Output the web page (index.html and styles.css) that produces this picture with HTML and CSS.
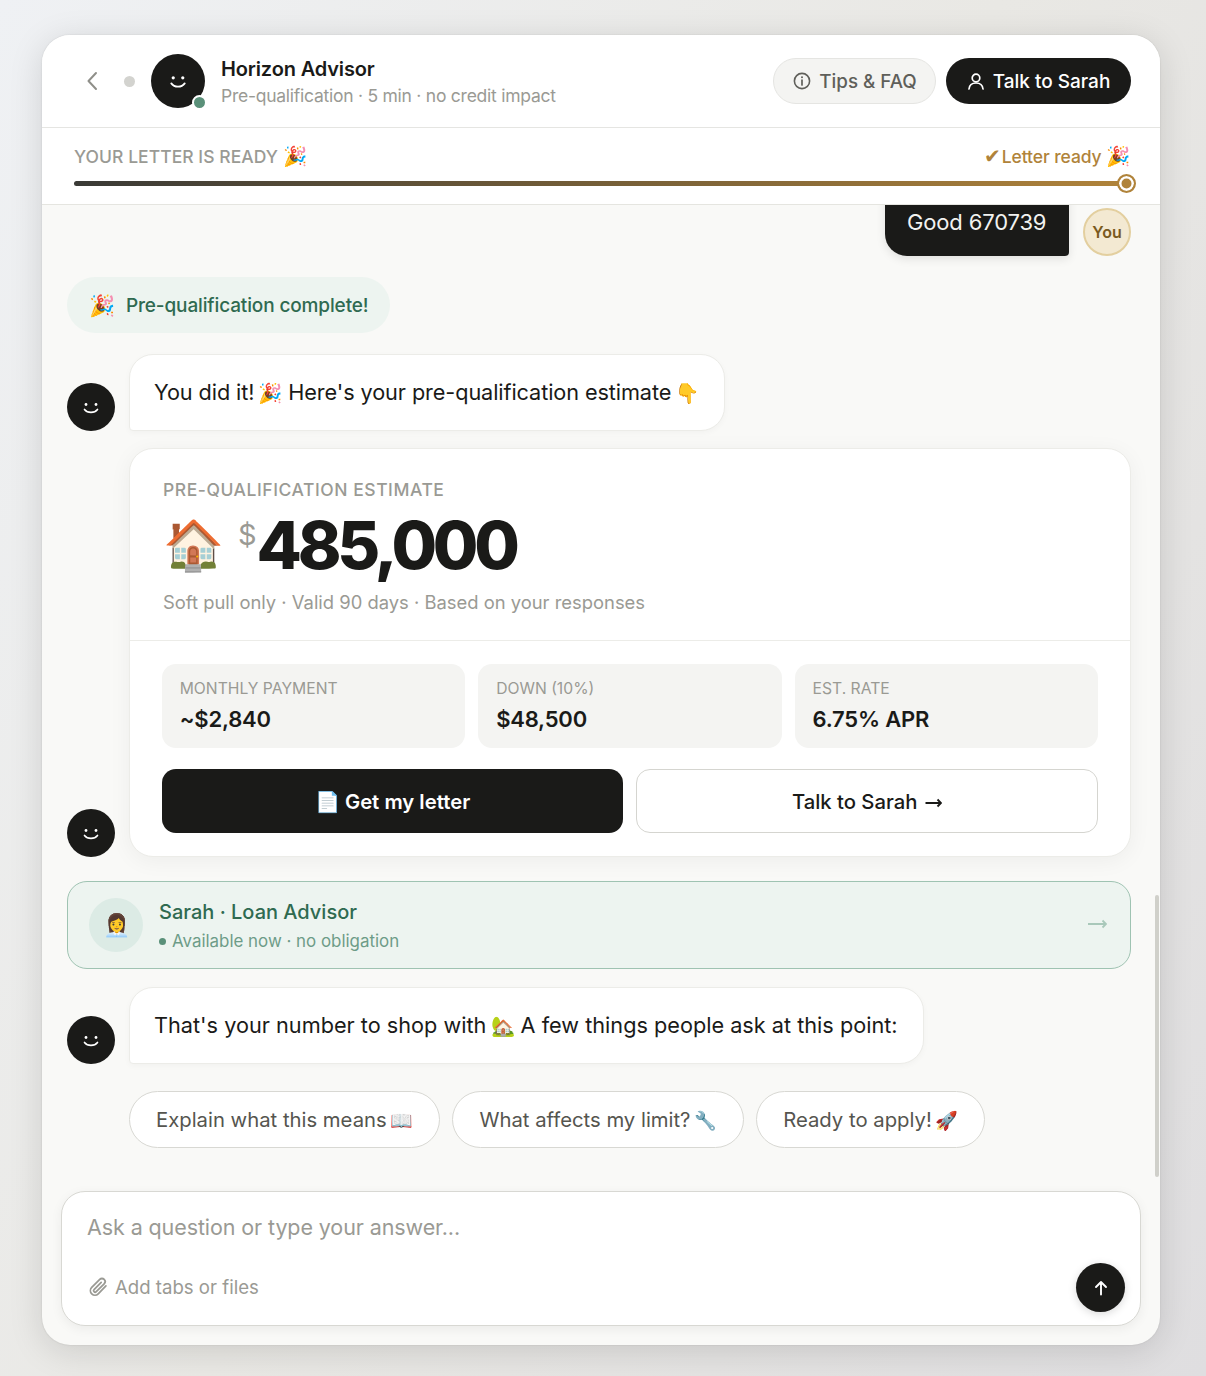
FILE: index.html
```html
<!DOCTYPE html>
<html lang="en">
<head>
<meta charset="utf-8">
<title>Horizon Advisor</title>
<link rel="stylesheet" href="styles.css">
</head>
<body>
<main class="window">
  <header class="topbar">
    <div class="top-left">
      <svg class="back" viewBox="0 0 12 20" width="12" height="20"><path d="M10 2 2.500 10 10 18" fill="none" stroke="#8f8f89" stroke-width="2" stroke-linecap="round" stroke-linejoin="round"/></svg>
      <span class="dot"></span>
      <div class="face face-lg">
        <svg viewBox="0 0 24 24" width="26" height="26"><circle cx="7.600" cy="9" r="1.500" fill="#fff"/><circle cx="16.400" cy="9" r="1.500" fill="#fff"/><path d="M5.800 14.200c1.600 2.200 3.700 3 6.200 3s4.600-.8 6.200-3" fill="none" stroke="#fff" stroke-width="1.700" stroke-linecap="round"/></svg>
        <span class="online"></span>
      </div>
      <div class="titles">
        <div class="title">Horizon Advisor</div>
        <div class="subtitle">Pre-qualification · 5 min · no credit impact</div>
      </div>
    </div>
    <div class="top-right">
      <button class="btn-tips"><svg viewBox="0 0 18 18" width="18" height="18"><circle cx="9" cy="9" r="7.600" fill="none" stroke="#5f5f5a" stroke-width="1.600"/><path d="M9 8v5" stroke="#5f5f5a" stroke-width="1.700" stroke-linecap="round"/><circle cx="9" cy="5.300" r="1" fill="#5f5f5a"/></svg>Tips &amp; FAQ</button>
      <button class="btn-talk"><svg viewBox="0 0 18 18" width="18" height="18"><circle cx="9" cy="6" r="3.800" fill="none" stroke="#fff" stroke-width="1.700"/><path d="M2 17c.4-4 3.300-6 7-6s6.600 2 7 6" fill="none" stroke="#fff" stroke-width="1.700" stroke-linecap="round"/></svg>Talk to Sarah</button>
    </div>
  </header>

  <section class="progress">
    <div class="progress-labels">
      <span class="progress-title">YOUR LETTER IS READY <span class="em-small">🎉</span></span>
      <span class="progress-state"><span class="check">✔</span>Letter ready <span class="em-small">🎉</span></span>
    </div>
    <div class="track"><span class="knob"></span></div>
  </section>

  <section class="messages">
    <div class="user-row">
      <div class="user-bubble">Good 670739</div>
      <div class="you">You</div>
    </div>

    <div class="complete-pill"><span class="pill-emoji">🎉</span>Pre-qualification complete!</div>

    <div class="bot-row row-first">
      <div class="face face-sm"><svg viewBox="0 0 24 24" width="24" height="24"><circle cx="7" cy="9.500" r="1.400" fill="#fff"/><circle cx="17" cy="9.500" r="1.400" fill="#fff"/><path d="M5.500 14.400c1.700 2.200 3.900 3 6.500 3s4.800-.8 6.500-3" fill="none" stroke="#fff" stroke-width="1.600" stroke-linecap="round"/></svg></div>
      <div class="bubble bubble-tight">You did it! <span class="em">🎉</span> Here's your pre-qualification estimate <span class="em">👇</span></div>
    </div>

    <div class="bot-row row-card">
      <div class="face face-sm"><svg viewBox="0 0 24 24" width="24" height="24"><circle cx="7" cy="9.500" r="1.400" fill="#fff"/><circle cx="17" cy="9.500" r="1.400" fill="#fff"/><path d="M5.500 14.400c1.700 2.200 3.900 3 6.500 3s4.800-.8 6.500-3" fill="none" stroke="#fff" stroke-width="1.600" stroke-linecap="round"/></svg></div>
      <article class="card">
        <div class="card-top">
          <div class="card-label">PRE-QUALIFICATION ESTIMATE</div>
          <div class="amount-row">
            <span class="house">🏠</span>
            <span class="currency">$</span>
            <span class="amount">485,000</span>
          </div>
          <div class="card-note">Soft pull only · Valid 90 days · Based on your responses</div>
        </div>
        <div class="card-bottom">
          <div class="stats">
            <div class="stat"><div class="stat-label">MONTHLY PAYMENT</div><div class="stat-value">~$2,840</div></div>
            <div class="stat"><div class="stat-label">DOWN (10%)</div><div class="stat-value">$48,500</div></div>
            <div class="stat"><div class="stat-label">EST. RATE</div><div class="stat-value">6.75% APR</div></div>
          </div>
          <div class="actions">
            <button class="act act-dark">📄 Get my letter</button>
            <button class="act act-light">Talk to Sarah<svg class="arrow-dark" viewBox="0 0 17 10" width="17" height="10"><path d="M.5 5H16M12.500 1.500 16 5l-3.500 3.500" fill="none" stroke="#1a1a18" stroke-width="1.900"/></svg></button>
          </div>
        </div>
      </article>
    </div>

    <div class="advisor">
      <div class="advisor-pic">👩‍💼</div>
      <div class="advisor-text">
        <div class="advisor-name">Sarah · Loan Advisor</div>
        <div class="advisor-sub"><span class="green-dot"></span>Available now · no obligation</div>
      </div>
      <svg class="advisor-arrow" viewBox="0 0 19 10" width="19" height="10"><path d="M0 5H18M14.500 1.500 18 5l-3.500 3.500" fill="none" stroke="#a9c8ba" stroke-width="1.800"/></svg>
    </div>

    <div class="bot-row row-second">
      <div class="face face-sm"><svg viewBox="0 0 24 24" width="24" height="24"><circle cx="7" cy="9.500" r="1.400" fill="#fff"/><circle cx="17" cy="9.500" r="1.400" fill="#fff"/><path d="M5.500 14.400c1.700 2.200 3.900 3 6.500 3s4.800-.8 6.500-3" fill="none" stroke="#fff" stroke-width="1.600" stroke-linecap="round"/></svg></div>
      <div class="bubble">That's your number to shop with <span class="em">🏡</span> A few things people ask at this point:</div>
    </div>

    <div class="chips">
      <button class="chip">Explain what this means <span class="em">📖</span></button>
      <button class="chip">What affects my limit? <span class="em">🔧</span></button>
      <button class="chip">Ready to apply! <span class="em">🚀</span></button>
    </div>
    <span class="scrollbar"></span>
  </section>

  <section class="composer-wrap">
    <div class="composer">
      <div class="placeholder">Ask a question or type your answer...</div>
      <div class="composer-foot">
        <div class="attach"><svg viewBox="0 0 20 20" width="22" height="22"><path d="M17.200 9l-7 7.200a4.100 4.100 0 0 1-5.900-5.800l7.300-7.300a2.800 2.800 0 0 1 4 4l-7.200 7.200a1.400 1.400 0 0 1-2-2l6.500-6.500" fill="none" stroke="#9a9a94" stroke-width="1.600" stroke-linecap="round" stroke-linejoin="round"/></svg>Add tabs or files</div>
        <button class="send"><svg viewBox="0 0 18 18" width="18" height="18"><path d="M9 15.500V3M4 8l5-5 5 5" fill="none" stroke="#fff" stroke-width="1.900" stroke-linecap="round" stroke-linejoin="round"/></svg></button>
      </div>
    </div>
  </section>
</main>
</body>
</html>
```
FILE: styles.css
```css
* { box-sizing: border-box; }
html, body { margin: 0; height: 100%; }
body {
  padding: 35px 46px 31px 42px;
  background: linear-gradient(120deg, #eff1f4 0%, #e9e8e4 50%, #dfdee0 100%);
  font-family: Inter, "Noto Sans", sans-serif;
  color: #1a1a18;
  height: 1376px;
  overflow: hidden;
}
button { font-family: inherit; cursor: pointer; }
.em { font-size: .9em; margin-left: -2px; }
.em-small { font-size: 19.500px; line-height: 1; }
.window {
  height: 1310px;
  display: flex;
  flex-direction: column;
  background: #f9f9f7;
  border-radius: 28px;
  overflow: hidden;
  box-shadow: 0 6px 34px rgba(0,0,0,.13), 0 0 2px rgba(0,0,0,.12);
}
.topbar {
  height: 93px;
  flex: none;
  display: flex;
  align-items: center;
  justify-content: space-between;
  padding: 0 29px 0 44px;
  background: #fff;
  border-bottom: 1px solid #e5e5e2;
}
.top-left { display: flex; align-items: center; }
.top-right { display: flex; align-items: center; gap: 10px; }
.back { margin-right: 26px; }
.dot { width: 11px; height: 11px; border-radius: 50%; background: #d3d3cf; margin-right: 16px; }
.face { position: relative; flex: none; display: flex; align-items: center; justify-content: center; background: #1a1a18; border-radius: 50%; }
.face-lg { width: 54px; height: 54px; margin-right: 16px; }
.face-sm { width: 48px; height: 48px; }
.online { position: absolute; right: -2px; bottom: -2px; width: 15px; height: 15px; border-radius: 50%; background: #5a9079; border: 2px solid #fff; }
.title { font-size: 20px; font-weight: 600; line-height: 28px; letter-spacing: -.15px; }
.subtitle { font-size: 17.500px; line-height: 24px; color: #9a9a94; letter-spacing: -.25px; margin-top: 1px; }
.btn-tips, .btn-talk {
  height: 46px;
  border-radius: 23px;
  display: flex;
  align-items: center;
  gap: 8px;
  font-size: 19px;
  font-weight: 500;
}
.btn-tips { width: 163px; justify-content: center; background: #f4f4f2; color: #5f5f5a; border: 1px solid #e5e5e2; font-size: 18.800px; padding-left: 7px; }
.btn-talk { width: 185px; justify-content: center; background: #1a1a18; color: #fff; border: 0; }
.progress {
  height: 77px;
  flex: none;
  padding: 15px 32px 0;
  background: #fff;
  border-bottom: 1px solid #e5e5e0;
}
.progress-labels { display: flex; justify-content: space-between; align-items: center; height: 27px; }
.progress-title { font-size: 17.500px; font-weight: 500; color: #9a9a94; letter-spacing: .05px; }
.progress-state { font-size: 17.500px; font-weight: 500; color: #b0833a; letter-spacing: -.1px; margin-right: -2px; }
.check { font-family: "DejaVu Sans", sans-serif; font-size: 20px; line-height: 1; margin-right: 1px; }
.track {
  position: relative;
  margin-top: 11px;
  height: 5px;
  border-radius: 3px;
  background: linear-gradient(90deg, #3a3a36, #b0833a);
}
.knob {
  position: absolute;
  right: -8px;
  top: -7px;
  width: 19px;
  height: 19px;
  border-radius: 50%;
  background: #b0833a;
  border: 2px solid #b0833a;
  box-shadow: inset 0 0 0 2.500px #fff;
}
.messages { position: relative; flex: none; height: 986px; overflow: hidden; padding: 0 29px 0 25px; }
.user-row { display: flex; justify-content: flex-end; align-items: flex-end; gap: 14px; height: 51px; }
.user-bubble {
  background: #1a1a18;
  color: #f2f2f0;
  font-size: 22px;
  letter-spacing: -.15px;
  width: 184px;
  height: 80px;
  margin-top: -29px;
  padding: 32px 0 0 22px;
  line-height: 28px;
  border-radius: 22px 22px 4px 22px;
  box-shadow: 0 3px 10px rgba(0,0,0,.1);
}
.you {
  width: 48px;
  height: 48px;
  border-radius: 50%;
  background: #f3e9d2;
  border: 2px solid #e3cf9f;
  color: #7a5a20;
  font-size: 16px;
  font-weight: 600;
  display: flex;
  align-items: center;
  justify-content: center;
}
.complete-pill {
  display: inline-flex;
  align-items: center;
  height: 56px;
  margin-top: 21px;
  padding: 0 22px;
  border-radius: 28px;
  background: #edf4f0;
  color: #2f6a50;
  font-size: 19px;
  font-weight: 500;
  letter-spacing: -.13px;
}
.pill-emoji { margin-right: 11px; font-size: 21px; }
.bot-row { display: flex; align-items: flex-end; gap: 14px; }
.row-first { margin-top: 21px; }
.row-card { margin-top: 17px; }
.row-second { margin-top: 18px; }
.bubble {
  background: #fff;
  border: 1px solid #ecece8;
  border-radius: 24px 24px 24px 4px;
  font-size: 21.700px;
  height: 77px;
  line-height: 75px;
  padding: 0 25px 0 24px;
  white-space: pre;
  box-shadow: 0 2px 6px rgba(0,0,0,.03);
}
.bubble-tight { letter-spacing: -.1px; }
.card {
  flex: 1;
  background: #fff;
  border: 1px solid #ecece8;
  border-radius: 24px;
  box-shadow: 0 4px 22px rgba(0,0,0,.05);
  height: 409px;
}
.card-top { height: 192px; padding: 29px 32px 0 33px; border-bottom: 1px solid #ecece8; }
.card-label { font-size: 17.500px; font-weight: 500; color: #9a9a94; letter-spacing: .55px; line-height: 24px; }
.amount-row { display: flex; align-items: flex-start; height: 76px; margin-top: 5px; }
.house { font-size: 49px; line-height: 76px; width: 75px; }
.currency { font-size: 29px; color: #9a9a94; line-height: 36px; margin-top: 10px; width: 18.500px; }
.amount { font-size: 66px; font-weight: 800; letter-spacing: -4.300px; line-height: 76px; }
.card-note { font-size: 18.400px; color: #9a9a94; line-height: 24px; margin-top: 7px; }
.card-bottom { padding: 23px 32px 0 31.700px; }
.stats { display: grid; grid-template-columns: repeat(3, 1fr); gap: 13px; }
.stat { height: 84px; border-radius: 14px; background: #f4f4f2; padding: 14px 18px; }
.stat-label { font-size: 15.700px; color: #9a9a94; line-height: 22px; }
.stat-value { font-size: 22px; font-weight: 600; line-height: 30px; margin-top: 4px; letter-spacing: -.2px; }
.actions { display: grid; grid-template-columns: 1fr 1fr; gap: 13px; margin-top: 21px; }
.act { height: 64px; border-radius: 14px; font-size: 20.300px; font-weight: 600; }
.act-dark { background: #1a1a18; color: #fff; border: 0; }
.act-light { background: #fff; color: #1a1a18; border: 1px solid #d5d5d0; font-weight: 500; }
.arrow-dark { margin-left: 8px; vertical-align: 1px; }
.advisor {
  margin-top: 24px;
  height: 88px;
  display: flex;
  align-items: center;
  padding: 0 23px 0 21px;
  border-radius: 20px;
  background: #edf4f0;
  border: 1px solid #9fc3b2;
}
.advisor-pic { width: 54px; height: 54px; border-radius: 50%; background: #dcebe5; display: flex; align-items: center; justify-content: center; font-size: 22px; margin-right: 16px; }
.advisor-text { flex: 1; }
.advisor-name { font-size: 20px; font-weight: 500; color: #2f6a50; line-height: 28px; margin-top: 1px; }
.advisor-sub { font-size: 16.900px; color: #6d9c88; line-height: 24px; display: flex; align-items: center; margin-top: 3px; }
.green-dot { width: 7px; height: 7px; border-radius: 50%; background: #5a9079; margin-right: 6px; }
.advisor-arrow { margin-top: -2px; }
.chips { display: flex; gap: 12.500px; margin: 27px 0 0 62px; }
.chip {
  height: 57px;
  padding: 0 25.500px 0 26px;
  border-radius: 29px;
  background: #fff;
  border: 1px solid #d8d8d3;
  color: #55554f;
  font-size: 20.300px;
}
.scrollbar { position: absolute; right: 1px; top: 690px; width: 4px; height: 282px; border-radius: 2px; background: #d0d0ca; }
.composer-wrap { flex: 1; padding: 0 19px; }
.composer {
  height: 135px;
  background: #fff;
  border: 1px solid #d8d8d3;
  border-radius: 24px;
  padding: 21px 15px 13px 25px;
  display: flex;
  flex-direction: column;
  justify-content: space-between;
  box-shadow: 0 3px 12px rgba(0,0,0,.06);
}
.placeholder { font-size: 21.500px; color: #9a9a94; line-height: 28px; letter-spacing: -.1px; }
.composer-foot { display: flex; justify-content: space-between; align-items: center; }
.attach { display: flex; align-items: center; gap: 6px; font-size: 18.600px; color: #9a9a94; margin-top: -2px; }
.send { width: 49px; height: 49px; border-radius: 50%; border: 0; background: #1a1a18; display: flex; align-items: center; justify-content: center; box-shadow: 0 2px 8px rgba(0,0,0,.15); }
```
